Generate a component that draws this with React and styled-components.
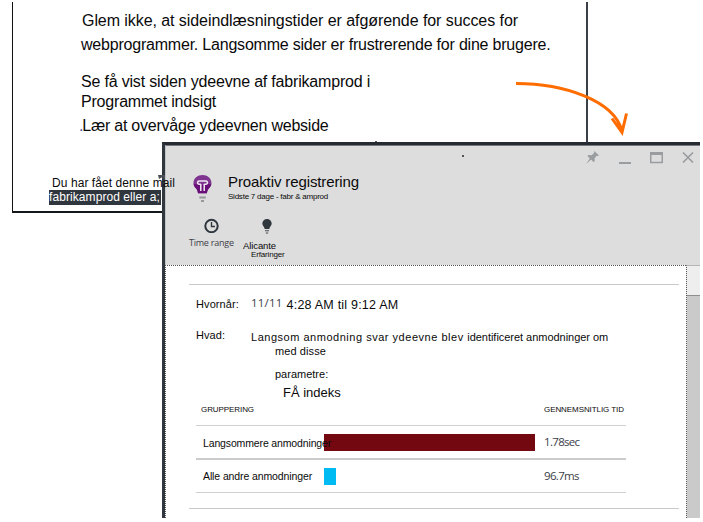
import React from "react";
import styled, { createGlobalStyle } from "styled-components";

const GlobalStyle = createGlobalStyle`
  body { margin: 0; background: #fff; }
  *, *::before { box-sizing: border-box; }
`;

const Stage = styled.main`
  position: relative;
  width: 703px;
  height: 522px;
  overflow: hidden;
  font-family: "Liberation Sans", Arial, sans-serif;
  color: #0a0a0a;
`;

const Text = styled.div`
  flex: none;
  white-space: pre;
  height: ${(p) => p.$h || 14}px;
  line-height: ${(p) => p.$h || 14}px;
  font-size: ${(p) => p.$size || 11}px;
  letter-spacing: ${(p) => p.$track || 0}px;
  margin-top: ${(p) => p.$top || 0}px;
  margin-left: ${(p) => p.$left || 0}px;
`;

const SegoeText = styled(Text)`
  font-family: "Open Sans", "Noto Sans", sans-serif;
  font-weight: 500;
  color: #3c4048;
`;

/* Mail message */
const Mail = styled.section`
  width: 576px;
  height: 211px;
  margin: 2px 0 0 12px;
  padding: 9px 0 0 67px;
  border: solid #15181b;
  border-width: 0 2px 2px;
  border-left-width: 1px;
  border-left-color: #111;
  border-right-color: #3b4046;
  padding-left: 68px;
  display: flex;
  flex-direction: column;
`;

const Run = styled.span`
  letter-spacing: ${(p) => p.$track}px;
  color: ${(p) => p.$color || "inherit"};
`;

const MailFooter = styled.footer`
  position: absolute;
  z-index: 2;
  left: 49px;
  top: 176px;
  display: flex;
  flex-direction: column;
  align-items: flex-start;
`;

const Highlight = styled.div`
  width: 112px;
  height: 15px;
  background: #30363e;
  color: #fff;
`;

const Arrow = styled.svg`
  position: absolute;
  left: 510px;
  top: 76px;
`;

const Fragment = styled.svg`
  position: absolute;
  z-index: 1;
  left: 158px;
  top: 174px;
`;

const Speck = styled.i`
  position: absolute;
  z-index: 1;
  left: ${(p) => p.$x}px;
  top: ${(p) => p.$y}px;
  width: 2px;
  height: 2px;
  border-radius: 1px;
  background: #25292d;
`;

/* Floating blade */
const Blade = styled.section`
  position: absolute;
  left: 162px;
  top: 142px;
  width: 538px;
  height: 376px;
  border: solid #30373f;
  border-width: 3px 0 0 3px;
  border-top-color: #262b31;
  display: flex;
  flex-direction: column;
  background: #fff;
`;

const BladeHeader = styled.header`
  height: 120px;
  background: #ddd;
  border-top: 1px solid #76797c;
  border-left: 1px solid #c3c5c7;
  display: flex;
  flex-direction: column;
`;

const WindowControls = styled.div`
  display: flex;
  justify-content: flex-end;
  height: 24px;
  padding: 5px 6px 0 0;
`;

const Product = styled.div`
  display: flex;
  height: 46px;
  padding: 4px 0 0 26px;
`;

const Titles = styled.div`
  margin-left: 15px;
`;

const Tools = styled.div`
  display: flex;
`;

const Tool = styled.div`
  display: flex;
  flex-direction: column;
  width: 54px;
  margin-left: ${(p) => p.$left}px;
  svg { margin-left: ${(p) => p.$icon}px; flex: none; }
`;

const BladeBody = styled.div`
  flex: 1;
  display: flex;
  min-height: 0;
`;

const Content = styled.div`
  width: 521px;
  padding: 18px 7px 0 23px;
  border-top: 1px dotted #555;
  border-left: 1px dotted #555;
`;

const Rule = styled.hr`
  width: ${(p) => p.$w}px;
  height: 1px;
  border: 0;
  margin: ${(p) => p.$top || 0}px 0 0;
  background: #c9c9c9;
`;

const Field = styled.div`
  display: flex;
  height: ${(p) => p.$h}px;
  padding-left: 7px;
`;

const Label = styled.div`
  width: 55px;
`;

const Table = styled.div`
  margin-left: 7px;
  width: 430px;
`;

const TableRow = styled.div`
  display: grid;
  grid-template-columns: 128px 220px 82px;
  height: ${(p) => p.$h}px;
  border-bottom: ${(p) => p.$line || 1}px solid ${(p) => p.$color || "#d0d0d0"};
`;

const NameCell = styled(Text)`
  position: relative;
  z-index: 1;
`;

const Bar = styled.div`
  width: ${(p) => p.$w}px;
  height: ${(p) => p.$h}px;
  margin-top: 8px;
  background: ${(p) => p.$color};
`;

const Scrollbar = styled.div`
  width: 14px;
  border-left: 1px dotted #555;
  border-top: 1px solid #b5b5b5;
  background: #eee;
  display: flex;
  align-items: flex-end;
`;

const Thumb = styled.div`
  width: 13px;
  height: 223px;
  background: #cacaca;
  border-top: 1px solid #8f8f8f;
`;

const ProductBulb = () => (
  <svg width="21" height="29" viewBox="0 0 21 29">
    <path d="M10.500 1C15.400 1 19.400 4.300 19.400 8.700c0 3.400-1.800 4.800-3.200 6.500-.8 1.200-.9 2.200-1.300 4H6c-.4-1.800-.5-2.800-1.300-4-1.400-1.700-3.200-3.100-3.200-6.500C1.500 4.300 5.600 1 10.500 1z" fill="#7f3590" />
    <path d="M1.500 9.500C3 11 17 11 19.400 9.500c-.2 2.800-1.800 4.200-3.200 5.700-.8 1.200-.9 2.200-1.300 4H6c-.4-1.800-.5-2.800-1.300-4-1.400-1.500-3-2.900-3.200-5.700z" fill="#681078" />
    <path d="M8.800 17V10M12.200 17V10M8.800 10.200H7.300c-2.400 0-2.200-3.200 0-3.200h6.400c2.200 0 2.400 3.200 0 3.200h-1.500" fill="none" stroke="#f2e8f4" strokeWidth="1.500" />
    <path d="M7.300 23.500h6.500M9 27h3" stroke="#96989a" strokeWidth="1.800" />
  </svg>
);

const PinIcon = () => (
  <svg width="13" height="13" viewBox="0 0 13 13">
    <path d="M8.300 0 13 4.400l-1.300.5-1-.2-2.100 2.500.1 3-1.200.7-2.400-2.500L0 13l3.800-5.600-2.300-2.300.9-1 3.100.1 2.600-2.300z" fill="#999da0" />
  </svg>
);

export default function App() {
  return (
    <>
      <GlobalStyle />
      <Stage>
        <Mail>
          <Text $size={16} $h={20} $left={1} $track={-0.068}>Glem ikke, at sideindlæsningstider er afgørende for succes for</Text>
          <Text $size={16} $h={20} $top={4} $track={-0.21}>webprogrammer. Langsomme sider er frustrerende for dine brugere.</Text>
          <Text $size={16} $h={20} $top={17} $track={-0.19}>Se få vist siden ydeevne af fabrikamprod i</Text>
          <Text $size={16} $h={20} $track={-0.2}>Programmet indsigt</Text>
          <Text $size={16} $h={20} $top={4} $left={-2} $track={-0.225}><Run $track={-1.2} $color="#4b4b9c">.</Run>Lær at overvåge ydeevnen webside</Text>
        </Mail>
        <MailFooter>
          <Text $size={12} $left={3} $track={0.072}>Du har fået denne mail</Text>
          <Highlight>
            <Text $size={12} $h={15} $track={0.077}>fabrikamprod eller a;</Text>
          </Highlight>
        </MailFooter>
        <Blade>
          <BladeHeader>
            <WindowControls>
              <svg width="108" height="14" viewBox="0 0 108 14">
                <PinIcon />
                <path d="M33 12h12" stroke="#999da0" strokeWidth="2" />
                <path d="M64.750 2.500h11.500v9h-11.500z" fill="none" stroke="#999da0" strokeWidth="1.500" />
                <path d="M64 2.500h13" stroke="#999da0" strokeWidth="3" />
                <path d="M97 1.500l10 10M107 1.500 97 11.500" stroke="#999da0" strokeWidth="1.700" />
              </svg>
            </WindowControls>
            <Product>
              <ProductBulb />
              <Titles>
                <Text $size={15} $h={16} $track={-0.113}>Proaktiv registrering</Text>
                <Text $size={8} $track={-0.232}>Sidste 7 dage - fabr &amp; amprod</Text>
              </Titles>
            </Product>
            <Tools>
              <Tool $left={23} $icon={15}>
                <svg width="16" height="17" viewBox="0 0 16 17">
                  <circle cx="7.500" cy="10" r="6.200" fill="none" stroke="#30363e" strokeWidth="2" />
                  <path d="M7.500 6v4.500H11" fill="none" stroke="#30363e" strokeWidth="1.400" />
                </svg>
                <SegoeText $size={9} $top={3} $track={-0.24}>Time range</SegoeText>
              </Tool>
              <Tool $left={0} $icon={18}>
                <svg width="12" height="19" viewBox="0 0 12 19">
                  <path d="M6 3a4.700 4.700 0 0 1 4.700 4.500C10.700 10 8.500 10.800 8.300 13H3.700C3.500 10.800 1.300 10 1.300 7.500A4.700 4.700 0 0 1 6 3z" fill="#30363e" />
                  <path d="M4 14.700h4M4.800 17h2.400" stroke="#44494f" strokeWidth="1.100" />
                </svg>
                <Text $size={9.5} $h={12} $top={5} $track={-0.1}>Alicante</Text>
                <Text $size={8} $h={8} $left={8} $top={-1} $track={-0.15}>Erfaringer</Text>
              </Tool>
            </Tools>
          </BladeHeader>
          <BladeBody>
            <Content>
              <Rule $w={490} />
              <Field $h={31}>
                <Label><Text $top={12} $track={0.1}>Hvornår:</Text></Label>
                <SegoeText $size={11.5} $top={11} $track={0.2}>11/11</SegoeText>
                <Text $size={12.5} $top={13} $left={4} $track={0.22}>4:28 AM til 9:12 AM</Text>
              </Field>
              <Field $h={86}>
                <Label><Text $top={12} $track={0.05}>Hvad:</Text></Label>
                <div>
                  <Text $top={14}><Run $track={0.52}>Langsom anmodning svar ydeevne blev </Run><Run $track={-0.03}>identificeret anmodninger om</Run></Text>
                  <Text $left={24} $track={0.1}>med disse</Text>
                  <Text $left={24} $top={9}>parametre:</Text>
                  <Text $size={13} $left={32} $top={5}>FÅ indeks</Text>
                </div>
              </Field>
              <Table>
                <TableRow $h={24}>
                  <Text $size={8} $left={5} $top={1} $track={-0.079}>GRUPPERING</Text>
                  <span />
                  <Text $size={8} $top={1} $track={-0.079}>GENNEMSNITLIG TID</Text>
                </TableRow>
                <TableRow $h={34} $line={2} $color="#cbcbcb">
                  <NameCell $size={10.5} $left={7} $top={10} $track={-0.14}>Langsommere anmodninger</NameCell>
                  <Bar $w={211} $h={17} $color="#740811" />
                  <SegoeText $size={11.5} $top={9} $track={-0.68}>1.78sec</SegoeText>
                </TableRow>
                <TableRow $h={33}>
                  <NameCell $size={10.5} $left={7} $top={9} $track={-0.11}>Alle andre anmodninger</NameCell>
                  <Bar $w={12} $h={17} $color="#00bbf2" />
                  <SegoeText $size={11.5} $top={9} $track={-0.68}>96.7ms</SegoeText>
                </TableRow>
              </Table>
              <Rule $w={490} $top={15} />
            </Content>
            <Scrollbar><Thumb /></Scrollbar>
          </BladeBody>
        </Blade>
        <Fragment width="8" height="8" viewBox="0 0 8 8">
          <path d="M0 1h7v6L4.500 3 1 5z" fill="#4b5057" />
        </Fragment>
        <Speck $x={375} $y={141} />
        <Speck $x={462} $y={155} />
        <Arrow width="125" height="62" viewBox="0 0 125 62">
          <path d="M6 7.500C53 7.500 104 24 112 55M102 42.500l10 14 4.500-19" fill="none" stroke="#ff6c00" strokeWidth="3" />
        </Arrow>
      </Stage>
    </>
  );
}
